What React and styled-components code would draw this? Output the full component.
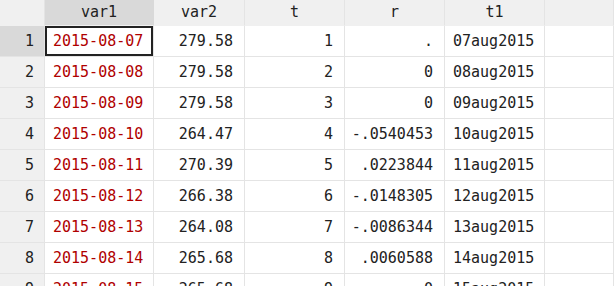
import React from 'react';
import styled, { createGlobalStyle } from 'styled-components';

const GlobalStyle = createGlobalStyle`
  html, body {
    margin: 0;
    padding: 0;
    background: #ffffff;
  }
  body {
    font-family: "DejaVu Sans Mono", "Liberation Mono", monospace;
    overflow: hidden;
  }
`;

const Sheet = styled.div`
  display: grid;
  grid-template-columns: 45px 109px 91px 100px 100px 100px 1fr;
  width: 614px;
  height: 286px;
  overflow: hidden;
  align-content: start;
  background: #ffffff;
`;

const HeadCell = styled.div`
  box-sizing: border-box;
  height: 26px;
  display: flex;
  align-items: center;
  justify-content: center;
  padding-bottom: 2px;
  font-size: 15px;
  color: #222222;
  background: ${p => (p.$active ? '#d9d9d9' : '#f0f0f0')};
  border-right: 1px solid ${p => (p.$active ? '#d9d9d9' : '#e4e4e4')};
  border-bottom: 1px solid #f0f0f0;
`;

const RowNum = styled.div`
  box-sizing: border-box;
  height: 31px;
  display: flex;
  align-items: center;
  justify-content: flex-end;
  padding-right: 10px;
  font-size: 15px;
  color: #222222;
  background: ${p => (p.$active ? '#d9d9d9' : '#f0f0f0')};
  border-right: 1px solid #e4e4e4;
  border-bottom: 1px solid #e4e4e4;
`;

const Cell = styled.div`
  box-sizing: border-box;
  height: 31px;
  display: flex;
  align-items: center;
  justify-content: ${p => (p.$left ? 'flex-start' : 'flex-end')};
  padding: ${p => (p.$left ? '0 0 0 8px' : '0 11px 0 0')};
  font-size: 15px;
  white-space: nowrap;
  color: ${p => (p.$date ? '#b00000' : '#222222')};
  border-right: 1px solid #e4e4e4;
  border-bottom: 1px solid #e4e4e4;
  box-shadow: ${p => (p.$selected ? 'inset 0 0 0 2px #222222' : 'none')};
`;

const rows = [
  ['2015-08-07', '279.58', '1', '.', '07aug2015'],
  ['2015-08-08', '279.58', '2', '0', '08aug2015'],
  ['2015-08-09', '279.58', '3', '0', '09aug2015'],
  ['2015-08-10', '264.47', '4', '-.0540453', '10aug2015'],
  ['2015-08-11', '270.39', '5', '.0223844', '11aug2015'],
  ['2015-08-12', '266.38', '6', '-.0148305', '12aug2015'],
  ['2015-08-13', '264.08', '7', '-.0086344', '13aug2015'],
  ['2015-08-14', '265.68', '8', '.0060588', '14aug2015'],
  ['2015-08-15', '265.68', '9', '0', '15aug2015'],
];

const columns = ['var1', 'var2', 't', 'r', 't1'];

export default function App() {
  return (
    <>
      <GlobalStyle />
      <Sheet>
        <HeadCell />
        {columns.map(c => (
          <HeadCell key={c} $active={c === 'var1'}>{c}</HeadCell>
        ))}
        <HeadCell />
        {rows.map((r, i) => (
          <React.Fragment key={i}>
            <RowNum $active={i === 0}>{i + 1}</RowNum>
            <Cell $left $date $selected={i === 0}>{r[0]}</Cell>
            <Cell>{r[1]}</Cell>
            <Cell>{r[2]}</Cell>
            <Cell>{r[3]}</Cell>
            <Cell $left>{r[4]}</Cell>
            <Cell />
          </React.Fragment>
        ))}
      </Sheet>
    </>
  );
}
